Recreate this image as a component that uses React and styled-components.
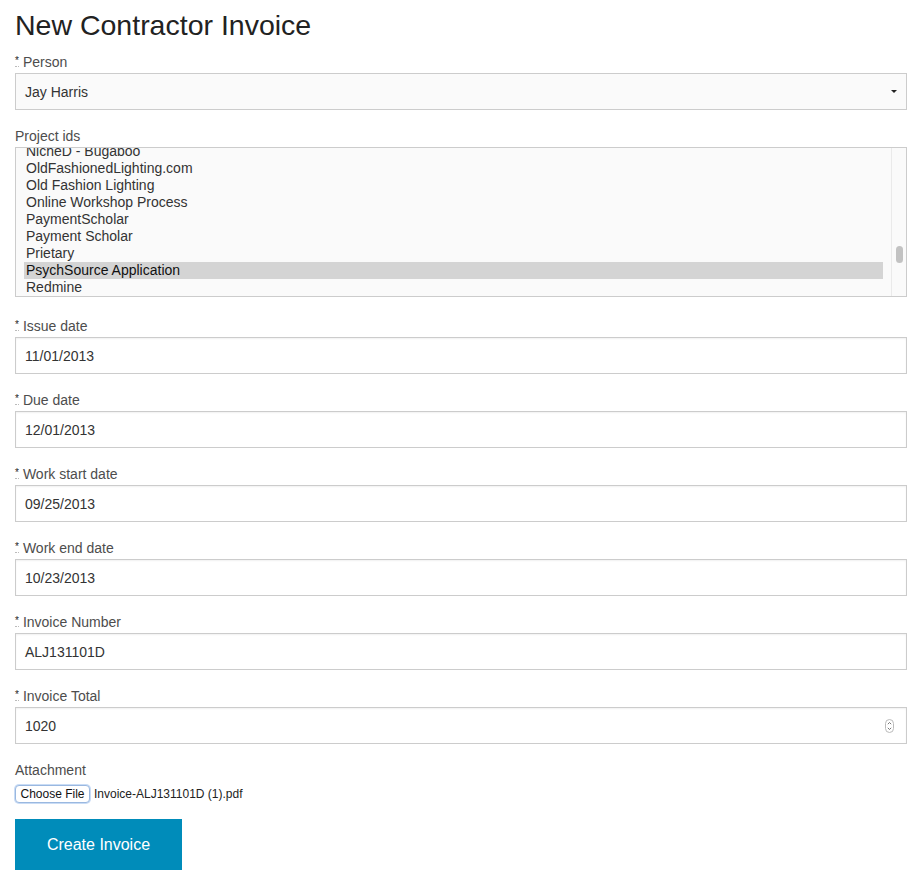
import styled, { createGlobalStyle } from 'styled-components';

const GlobalStyle = createGlobalStyle`
  html, body {
    margin: 0;
    padding: 0;
    background: #fff;
  }
  body {
    font-family: "Liberation Sans", Arial, sans-serif;
    color: #222;
  }
`;

const Page = styled.form`
  padding: 0 15px 18px;
  width: 892px;
`;

const Title = styled.h1`
  font-size: 28.5px;
  font-weight: normal;
  line-height: 1.1;
  margin: 0;
  padding: 10px 0 11px;
  color: #222;
`;

const Field = styled.div`
  display: flex;
  flex-direction: column;
  margin-bottom: ${p => p.$gap ?? 16}px;
`;

const Label = styled.label`
  font-size: 14px;
  line-height: 21px;
  color: #4d4d4d;
`;

const Req = styled.abbr`
  font-size: 10px;
  color: #222;
  text-decoration: none;
  border-bottom: 1px dotted #bbb;
  margin-right: 4px;
  vertical-align: 3px;
  line-height: 1;
`;

const InputBox = styled.div`
  height: 37px;
  box-sizing: border-box;
  border: 1px solid #ccc;
  background: ${p => (p.$grey ? '#fafafa' : '#fff')};
  box-shadow: ${p => (p.$grey ? 'none' : 'inset 0 1px 2px rgba(0,0,0,0.06)')};
  display: flex;
  align-items: center;
  justify-content: space-between;
  padding: 0 9px;
  font-size: 14px;
  color: #333;
`;

const Caret = styled.span`
  width: 0;
  height: 0;
  border-left: 3px solid transparent;
  border-right: 3px solid transparent;
  border-top: 3px solid #222;
`;

const ListBox = styled.div`
  height: 150px;
  box-sizing: border-box;
  border: 1px solid #ccc;
  background: #fafafa;
  display: flex;
  overflow: hidden;
`;

const Options = styled.ul`
  flex: 1;
  list-style: none;
  margin: -5px 0 0;
  padding: 0 8px;
`;

const Option = styled.li`
  font-size: 14px;
  line-height: 17px;
  padding-left: 2px;
  color: ${p => (p.$selected ? '#111' : '#333')};
  background: ${p => (p.$selected ? '#d4d4d4' : 'transparent')};
`;

const Track = styled.div`
  width: 14px;
  border-left: 1px solid #eaeaea;
  display: flex;
  justify-content: center;
`;

const Thumb = styled.div`
  width: 7px;
  height: 17px;
  margin-top: 98px;
  border-radius: 4px;
  background: #c2c2c2;
`;

const FileRow = styled.div`
  display: flex;
  align-items: center;
  gap: 4px;
  margin-top: 4px;
  font-size: 12px;
  color: #222;
`;

const FileButton = styled.span`
  box-sizing: border-box;
  height: 18px;
  width: 75px;
  display: inline-flex;
  align-items: center;
  justify-content: center;
  font-size: 12px;
  background: #fff;
  border: 1px solid #9ab8e0;
  border-radius: 4px;
  box-shadow: 0 0 0 1px #c9dcf5;
  color: #111;
`;

const Submit = styled.button`
  display: block;
  margin-top: 16px;
  width: 167px;
  height: 51px;
  border: none;
  background: #008cba;
  color: #fff;
  font-family: "Liberation Sans", Arial, sans-serif;
  font-size: 16px;
  cursor: pointer;
`;

const Spinner = () => (
  <svg width="9" height="14" viewBox="0 0 9 14" style={{ marginRight: 3 }}>
    <rect x="0.5" y="0.5" width="8" height="13" rx="4" fill="#fff" stroke="#bbb" />
    <path d="M2.8 5.2 L4.5 3.5 L6.2 5.2" fill="none" stroke="#666" strokeWidth="0.9" />
    <path d="M2.8 8.8 L4.5 10.5 L6.2 8.8" fill="none" stroke="#666" strokeWidth="0.9" />
  </svg>
);

const projects = [
  'NicheD - Bugaboo',
  'OldFashionedLighting.com',
  'Old Fashion Lighting',
  'Online Workshop Process',
  'PaymentScholar',
  'Payment Scholar',
  'Prietary',
  'PsychSource Application',
  'Redmine',
];

const textFields = [
  ['Issue date', '11/01/2013'],
  ['Due date', '12/01/2013'],
  ['Work start date', '09/25/2013'],
  ['Work end date', '10/23/2013'],
  ['Invoice Number', 'ALJ131101D'],
];

const App = () => {
  return (
    <>
      <GlobalStyle />
      <Page onSubmit={e => e.preventDefault()}>
        <Title>New Contractor Invoice</Title>

        <Field>
          <Label><Req title="required">*</Req>Person</Label>
          <InputBox $grey>
            <span>Jay Harris</span>
            <Caret />
          </InputBox>
        </Field>

        <Field $gap={19}>
          <Label>Project ids</Label>
          <ListBox>
            <Options>
              {projects.map(name => (
                <Option key={name} $selected={name === 'PsychSource Application'}>
                  {name}
                </Option>
              ))}
            </Options>
            <Track>
              <Thumb />
            </Track>
          </ListBox>
        </Field>

        {textFields.map(([label, value]) => (
          <Field key={label}>
            <Label><Req title="required">*</Req>{label}</Label>
            <InputBox>
              <span>{value}</span>
            </InputBox>
          </Field>
        ))}

        <Field>
          <Label><Req title="required">*</Req>Invoice Total</Label>
          <InputBox>
            <span>1020</span>
            <Spinner />
          </InputBox>
        </Field>

        <Field $gap={0}>
          <Label>Attachment</Label>
          <FileRow>
            <FileButton>Choose File</FileButton>
            <span>Invoice-ALJ131101D (1).pdf</span>
          </FileRow>
        </Field>

        <Submit type="submit">Create Invoice</Submit>
      </Page>
    </>
  );
};

export default App;
